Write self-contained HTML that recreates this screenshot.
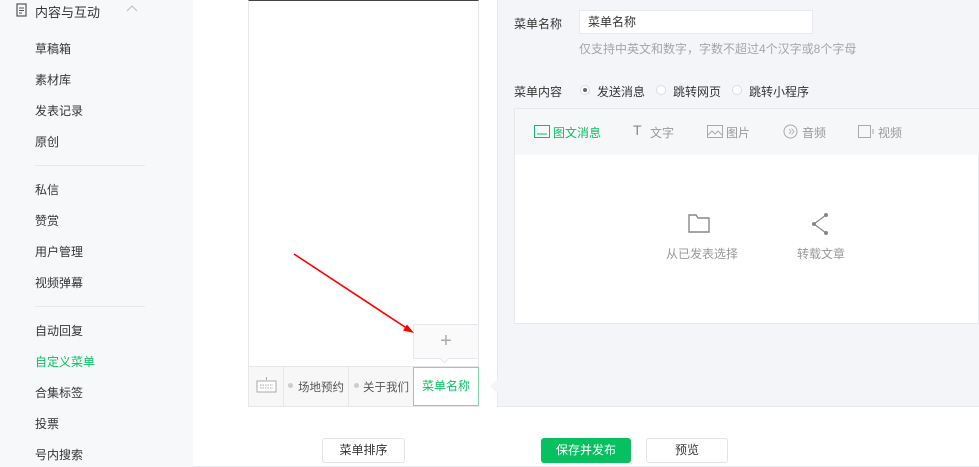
<!DOCTYPE html>
<html><head><meta charset="utf-8"><style>
*{margin:0;padding:0;box-sizing:border-box}
body{width:979px;height:467px;overflow:hidden;background:#fff;font-family:"Liberation Sans","Noto Sans CJK SC",sans-serif;font-size:12px;color:#353535;position:relative}
.abs{position:absolute}
.side{left:0;top:0;width:193px;height:467px;background:#f7f8fa}
.side .it{position:absolute;left:35px;font-size:12px;color:#353535;line-height:16px}
.hr{position:absolute;left:35px;width:110px;height:1px;background:#e7e8eb}
.t{white-space:nowrap}
</style></head><body>
<div class="abs side">
  <svg class="abs" style="left:16px;top:3px" width="12" height="14" viewBox="0 0 12 14"><rect x="1" y="1" width="9" height="12" fill="none" stroke="#555" stroke-width="1.2"/><path d="M3 5h5M3 7.5h5M3 10h3" stroke="#555" stroke-width="1"/></svg>
  <div class="abs t" style="left:35px;top:2px;font-size:13px;color:#353535">内容与互动</div>
  <svg class="abs" style="left:126px;top:5px" width="12" height="8"><path d="M1 6l5-5 5 5" fill="none" stroke="#bbb" stroke-width="1"/></svg>
  <div class="it" style="top:41px">草稿箱</div>
  <div class="it" style="top:72px">素材库</div>
  <div class="it" style="top:103px">发表记录</div>
  <div class="it" style="top:134px">原创</div>
  <div class="hr" style="top:165px"></div>
  <div class="it" style="top:182px">私信</div>
  <div class="it" style="top:213px">赞赏</div>
  <div class="it" style="top:244px">用户管理</div>
  <div class="it" style="top:275px">视频弹幕</div>
  <div class="hr" style="top:306px"></div>
  <div class="it" style="top:323px">自动回复</div>
  <div class="it" style="top:354px;color:#07c160">自定义菜单</div>
  <div class="it" style="top:385px">合集标签</div>
  <div class="it" style="top:416px">投票</div>
  <div class="it" style="top:447px">号内搜索</div>
</div>
<!-- phone -->
<div class="abs" style="left:248px;top:0;width:231px;height:407px;border:1px solid #e7e7eb;border-top:1px solid #444;background:#fff"></div>
<div class="abs" style="left:249px;top:366px;width:229px;height:40px;background:#f7f7f7;border-top:1px solid #e7e7eb"></div>
<div class="abs" style="left:283px;top:366px;width:1px;height:40px;background:#e7e7eb"></div>
<div class="abs" style="left:348px;top:366px;width:1px;height:40px;background:#e7e7eb"></div>
<svg class="abs" style="left:256px;top:376px" width="22" height="18" viewBox="0 0 22 18"><rect x="1" y="5" width="19" height="11" fill="#fff" stroke="#aaa"/><path d="M4 9h13M4 12h13" stroke="#aaa" stroke-dasharray="1.5 1"/><path d="M10.5 1v3" stroke="#aaa"/></svg>
<div class="abs" style="left:288px;top:383px;width:5px;height:5px;border-radius:50%;background:#ccc"></div>
<div class="abs t" style="left:298px;top:379px;color:#555;font-size:11.5px">场地预约</div>
<div class="abs" style="left:354px;top:383px;width:5px;height:5px;border-radius:50%;background:#ccc"></div>
<div class="abs t" style="left:363px;top:379px;color:#555;font-size:11.5px">关于我们</div>
<div class="abs t" style="left:413px;top:367px;width:66px;height:39px;border:1px solid #7fd8a6;background:#fff;color:#07c160;text-align:center;line-height:37px">菜单名称</div>
<div class="abs" style="left:413px;top:324px;width:66px;height:35px;border:1px solid #e7e7eb;background:#fafafa;color:#aaa;text-align:center;line-height:33px;font-size:20px;font-weight:300">+</div>
<div class="abs" style="left:441px;top:355px;width:7px;height:7px;background:#fafafa;border-right:1px solid #e7e7eb;border-bottom:1px solid #e7e7eb;transform:rotate(45deg)"></div>
<svg class="abs" style="left:0;top:0" width="979" height="467"><line x1="294" y1="254" x2="408" y2="329" stroke="#f00" stroke-width="1.6"/><path d="M414 333l-11-2.5 4-6z" fill="#f00"/></svg>
<!-- right panel -->
<div class="abs" style="left:497px;top:0;width:482px;height:407px;background:#f4f5f9;border-bottom:1px solid #e7e8eb;border-left:1px solid #e7e8eb"></div>
<div class="abs" style="left:492px;top:381px;width:10px;height:10px;background:#f4f5f9;transform:rotate(45deg)"></div>
<div class="abs t" style="left:514px;top:15px">菜单名称</div>
<div class="abs t" style="left:579px;top:10px;width:234px;height:24px;background:#fff;border:1px solid #e9e9ee;padding-left:8px;line-height:22px">菜单名称</div>
<div class="abs t" style="left:579px;top:40px;color:#a5a5a5">仅支持中英文和数字，字数不超过4个汉字或8个字母</div>
<div class="abs t" style="left:514px;top:83px">菜单内容</div>
<div class="abs" style="left:580px;top:85px;width:10px;height:10px;border-radius:50%;border:1px solid #ddd;background:#fff"></div>
<div class="abs" style="left:583px;top:88px;width:4px;height:4px;border-radius:50%;background:#666"></div>
<div class="abs t" style="left:597px;top:83px">发送消息</div>
<div class="abs" style="left:656px;top:85px;width:10px;height:10px;border-radius:50%;border:1px solid #ddd;background:#fff"></div>
<div class="abs t" style="left:673px;top:83px">跳转网页</div>
<div class="abs" style="left:732px;top:85px;width:10px;height:10px;border-radius:50%;border:1px solid #ddd;background:#fff"></div>
<div class="abs t" style="left:749px;top:83px">跳转小程序</div>
<div class="abs" style="left:514px;top:108px;width:465px;height:216px;background:#fff;border:1px solid #e7e8eb"></div>
<div class="abs" style="left:515px;top:109px;width:464px;height:46px;background:#f6f7f9"></div>
<svg class="abs" style="left:534px;top:125px" width="16" height="13"><rect x="0.5" y="0.5" width="15" height="12" fill="none" stroke="#07c160"/><path d="M3 9h10" stroke="#07c160"/></svg>
<div class="abs t" style="left:553px;top:124px;color:#07c160">图文消息</div>
<div class="abs t" style="left:633px;top:122px;color:#888;font-size:14px">T</div>
<div class="abs t" style="left:650px;top:124px;color:#999">文字</div>
<svg class="abs" style="left:707px;top:125px" width="16" height="13"><rect x="0.5" y="0.5" width="15" height="12" fill="none" stroke="#aaa"/><path d="M1 10l4-4 3 3 3-3 4 4" fill="none" stroke="#aaa"/></svg>
<div class="abs t" style="left:726px;top:124px;color:#999">图片</div>
<svg class="abs" style="left:783px;top:124px" width="15" height="15"><circle cx="7.5" cy="7.5" r="6.5" fill="none" stroke="#aaa"/><path d="M6 5l2 2.5-2 2.5M8.5 4.5l2.5 3-2.5 3" fill="none" stroke="#aaa" stroke-width=".8"/></svg>
<div class="abs t" style="left:802px;top:124px;color:#999">音频</div>
<svg class="abs" style="left:858px;top:125px" width="18" height="13"><rect x="0.5" y="0.5" width="12" height="12" fill="none" stroke="#aaa"/><path d="M15 4v5" stroke="#aaa"/></svg>
<div class="abs t" style="left:878px;top:124px;color:#999">视频</div>
<svg class="abs" style="left:688px;top:213px" width="23" height="20"><path d="M1 2h7l2 3h11v14H1z" fill="none" stroke="#888" stroke-width="1.4"/></svg>
<div class="abs t" style="left:666px;top:245px;color:#999">从已发表选择</div>
<svg class="abs" style="left:810px;top:212px" width="20" height="24"><path d="M16 3L4 12l12 9" fill="none" stroke="#888" stroke-width="1.2"/><circle cx="16" cy="3" r="2" fill="#888"/><circle cx="4" cy="12" r="2" fill="#888"/><circle cx="16" cy="21" r="2" fill="#888"/></svg>
<div class="abs t" style="left:797px;top:245px;color:#999">转载文章</div>
<!-- buttons -->
<div class="abs t" style="left:322px;top:438px;width:83px;height:25px;border:1px solid #e4e4e4;border-radius:3px;text-align:center;line-height:23px;background:#fff">菜单排序</div>
<div class="abs t" style="left:541px;top:438px;width:90px;height:25px;border-radius:3px;background:#07c160;color:#fff;text-align:center;line-height:25px">保存并发布</div>
<div class="abs t" style="left:646px;top:438px;width:82px;height:25px;border:1px solid #e4e4e4;border-radius:3px;text-align:center;line-height:23px;background:#fff">预览</div>
<div class="abs" style="left:193px;top:466px;width:786px;height:1px;background:#e7e8eb"></div>
</body></html>
